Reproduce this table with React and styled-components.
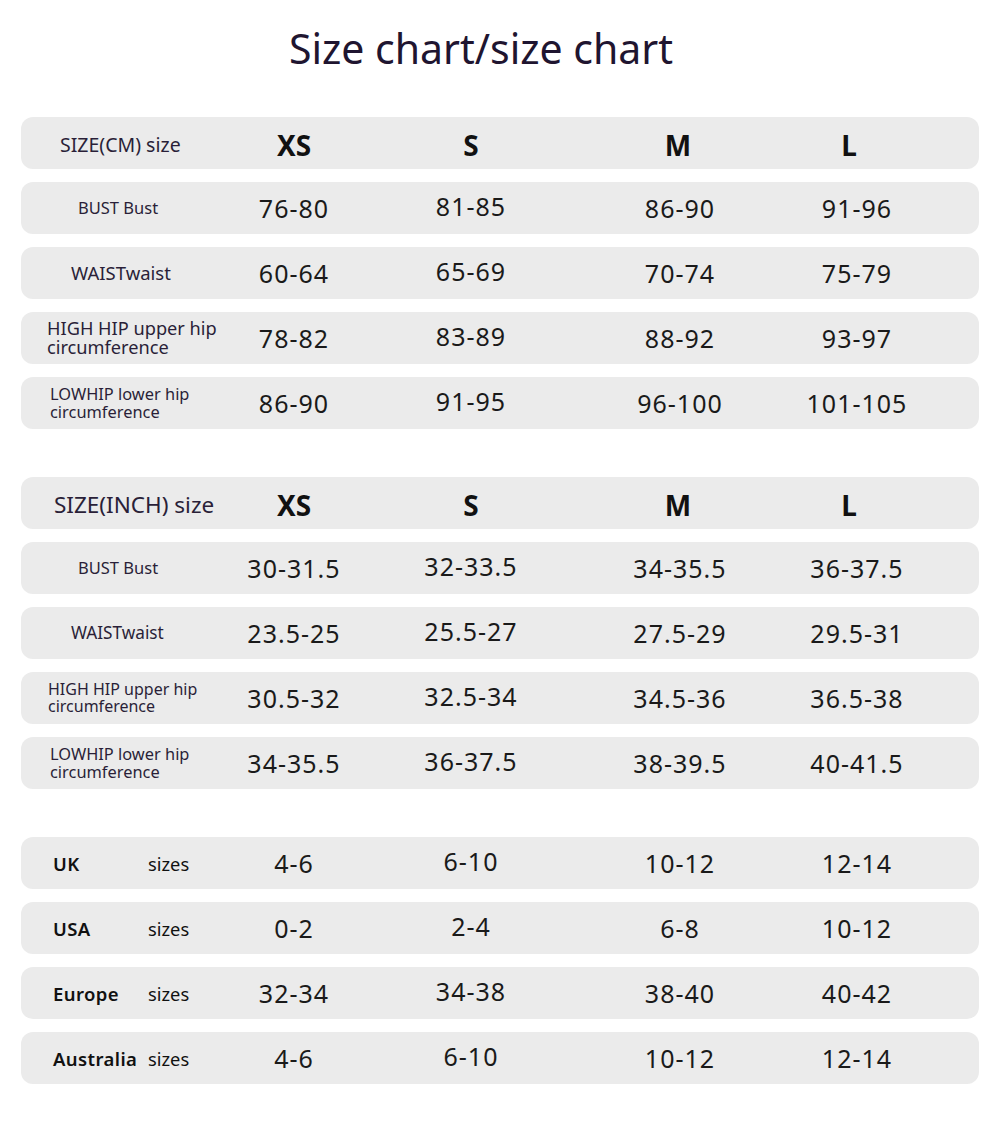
import React from 'react';
import styled, { createGlobalStyle } from 'styled-components';

const GlobalStyle = createGlobalStyle`
  body {
    margin: 0;
    background: #ffffff;
    font-family: "Noto Sans", "Open Sans", sans-serif;
  }
`;

const Page = styled.div`
  width: 1000px;
  padding: 0 21px 40px;
  box-sizing: border-box;
`;

const Title = styled.h1`
  margin: 0;
  height: 117px;
  padding-top: 22px;
  box-sizing: border-box;
  text-align: center;
  padding-right: 38px;
  font-size: 41px;
  font-weight: 400;
  line-height: 52px;
  color: #1f1530;
`;

const Section = styled.div`
  display: flex;
  flex-direction: column;
  gap: 13px;
  margin-bottom: 48px;
`;

const Row = styled.div`
  display: grid;
  grid-template-columns: 183px 180px 174px 244px 110px 1fr;
  align-items: center;
  height: 52px;
  background: #ebebeb;
  border-radius: 12px;
`;

const Label = styled.div`
  padding-left: ${p => p.$pl}px;
  padding-top: ${p => p.$pt || 0}px;
  font-size: ${p => p.$size}px;
  line-height: ${p => p.$lh || 22}px;
  color: #2a1f38;
  white-space: nowrap;
`;

const Country = styled.div`
  display: grid;
  grid-template-columns: 95px 1fr;
  align-items: center;
  padding-left: 32px;
  color: #111;
  font-size: 18.3px;
`;

const CountryName = styled.span`
  font-weight: 600;
  font-size: 18.5px;
  letter-spacing: 0.4px;
`;

const Head = styled.div`
  text-align: center;
  padding-top: 3px;
  padding-right: ${p => p.$shift || 0}px;
  font-size: 28px;
  font-weight: 700;
  color: #111;
`;

const Value = styled.div`
  text-align: center;
  padding-bottom: ${p => (p.$raised ? 5 : 0)}px;
  font-size: 25px;
  letter-spacing: 1px;
  color: #1a1a1a;
  white-space: nowrap;
`;

const cmRows = [
  { label: 'BUST Bust', pl: 57, size: 16.5, vals: ['76-80', '81-85', '86-90', '91-96'] },
  { label: 'WAISTwaist', pl: 50, size: 18.5, vals: ['60-64', '65-69', '70-74', '75-79'] },
  { label: ['HIGH HIP upper hip', 'circumference'], pl: 26, size: 18.2, lh: 19, vals: ['78-82', '83-89', '88-92', '93-97'] },
  { label: ['LOWHIP lower hip', 'circumference'], pl: 29, size: 16.4, lh: 18, vals: ['86-90', '91-95', '96-100', '101-105'] },
];

const inchRows = [
  { label: 'BUST Bust', pl: 57, size: 16.5, vals: ['30-31.5', '32-33.5', '34-35.5', '36-37.5'] },
  { label: 'WAISTwaist', pl: 50, size: 17.2, vals: ['23.5-25', '25.5-27', '27.5-29', '29.5-31'] },
  { label: ['HIGH HIP upper hip', 'circumference'], pl: 27, size: 16, lh: 17, vals: ['30.5-32', '32.5-34', '34.5-36', '36.5-38'] },
  { label: ['LOWHIP lower hip', 'circumference'], pl: 29, size: 16.4, lh: 18, vals: ['34-35.5', '36-37.5', '38-39.5', '40-41.5'] },
];

const countryRows = [
  { name: 'UK', vals: ['4-6', '6-10', '10-12', '12-14'] },
  { name: 'USA', vals: ['0-2', '2-4', '6-8', '10-12'] },
  { name: 'Europe', vals: ['32-34', '34-38', '38-40', '40-42'] },
  { name: 'Australia', vals: ['4-6', '6-10', '10-12', '12-14'] },
];

const sizes = [
  { s: 'XS', shift: 0 },
  { s: 'S', shift: 0 },
  { s: 'M', shift: 4 },
  { s: 'L', shift: 16 },
];

const renderLabel = label =>
  Array.isArray(label) ? label.map(line => <div key={line}>{line}</div>) : label;

const Values = ({ vals }) =>
  vals.map((v, i) => <Value key={i} $raised={i === 1}>{v}</Value>);

const MeasureTable = ({ heading, pl, size, rows }) => (
  <Section>
    <Row>
      <Label $pl={pl} $pt={3} $size={size}>{heading}</Label>
      {sizes.map(h => <Head key={h.s} $shift={h.shift}>{h.s}</Head>)}
    </Row>
    {rows.map(row => (
      <Row key={row.vals[0] + row.pl}>
        <Label $pl={row.pl} $size={row.size} $lh={row.lh}>{renderLabel(row.label)}</Label>
        <Values vals={row.vals} />
      </Row>
    ))}
  </Section>
);

const App = () => (
  <Page>
    <GlobalStyle />
    <Title>Size chart/size chart</Title>
    <MeasureTable heading="SIZE(CM) size" pl={39} size={19.5} rows={cmRows} />
    <MeasureTable heading="SIZE(INCH) size" pl={33} size={22.5} rows={inchRows} />
    <Section>
      {countryRows.map(row => (
        <Row key={row.name}>
          <Country>
            <CountryName>{row.name}</CountryName>
            <span>sizes</span>
          </Country>
          <Values vals={row.vals} />
        </Row>
      ))}
    </Section>
  </Page>
);

export default App;
